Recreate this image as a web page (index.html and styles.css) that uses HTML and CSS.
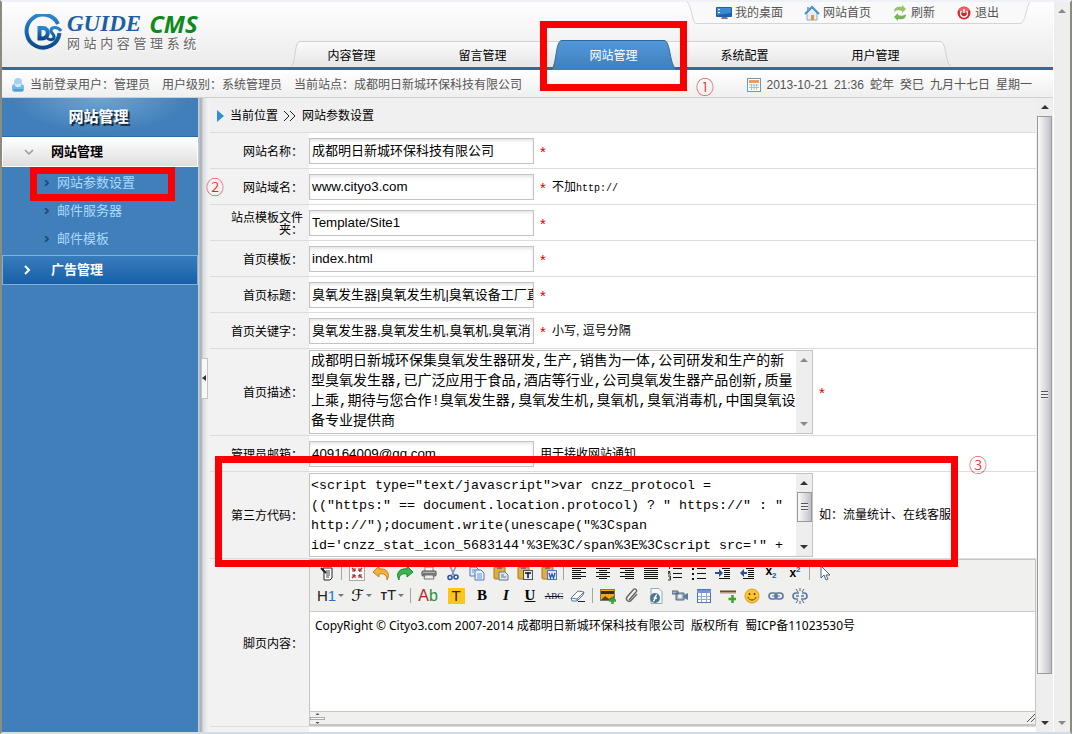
FILE: index.html
```html
<!DOCTYPE html>
<html lang="zh-CN">
<head>
<meta charset="utf-8">
<title>网站内容管理系统</title>
<link rel="stylesheet" href="styles.css">
</head>
<body>
<div class="window">
<div class="app">
  <header class="header">
    <div class="brand">
      <svg class="brand-mark" viewBox="0 0 38 38" width="38" height="38" aria-hidden="true">
        <defs><linearGradient id="gm" x1="0" y1="0" x2="0" y2="1"><stop offset="0" stop-color="#2b86d0"/><stop offset="1" stop-color="#0b4a8c"/></linearGradient></defs>
        <path d="M34 10 A16.500 16.500 0 1 0 35.500 19" fill="none" stroke="url(#gm)" stroke-width="4"/>
        <path d="M15.500 14 H19 C26 14 25 24.500 18 24.500 H15.500 Z" fill="none" stroke="url(#gm)" stroke-width="4"/>
        <path d="M37 17 C34 12 27 12.500 27 16.500 C27 20 31 20 30 23.500 C29 26.500 25 26 23 24" fill="none" stroke="url(#gm)" stroke-width="3"/>
      </svg>
      <div class="brand-text">
        <div class="brand-name"><span class="guide">GUIDE</span><span class="cms">CMS</span></div>
        <div class="tagline">网 站 内 容 管 理 系 统</div>
      </div>
    </div>
    <div class="header-main">
      <div class="utility">
        <svg class="utility-shape" viewBox="0 0 344 22" preserveAspectRatio="none" aria-hidden="true"><path d="M0 0 C5 3 5 21.500 9 21.500 H333 C339 21.500 339 3 343 0" fill="#f9f9f9" stroke="#d5d5d5"/></svg>
        <a href="#"><svg width="16" height="14" viewBox="0 0 16 14"><rect x="0" y="1" width="16" height="10" rx="1" fill="#1d5fa8"/><path d="M1 2h14v5L1 9z" fill="#3b8bd2"/><path d="M2 3h2v1H2zM2 6h2v1H2z" fill="#fff"/><path d="M5 13h7l-1-2H6z" fill="#777"/></svg>我的桌面</a>
        <a href="#"><svg width="16" height="16" viewBox="0 0 16 16"><path d="M3 8l5-5 5 5v7H3z" fill="#e8eef4" stroke="#8fa8bd"/><path d="M1 9l7-7 7 7" fill="none" stroke="#4b93c6" stroke-width="2"/><rect x="7" y="10" width="3" height="5" fill="#d99547"/><rect x="3" y="2" width="2" height="3" fill="#7ba7c7"/></svg>网站首页</a>
        <a href="#"><svg width="16" height="16" viewBox="0 0 16 16"><path d="M2 7c0-5 4-6 8-5V0l4 4-4 4V6C7 5 4 5 2 7z" fill="#97c468"/><path d="M14 9c0 5-4 6-8 5v2l-4-4 4-4v2c3 1 6 1 8-1z" fill="#79b257"/></svg>刷新</a>
        <a href="#"><svg width="16" height="16" viewBox="0 0 16 16"><circle cx="8" cy="8" r="6.500" fill="#d7262b"/><ellipse cx="8" cy="5" rx="5" ry="3" fill="#e8666a"/><path d="M5.500 6a3.500 3.500 0 1 0 5 0M8 4v4" fill="none" stroke="#fff" stroke-width="1.500"/></svg>退出</a>
      </div>
      <nav class="tabs">
        <svg class="tabs-shape" viewBox="0 0 662 26" preserveAspectRatio="none" aria-hidden="true"><defs><linearGradient id="gt" x1="0" y1="0" x2="0" y2="1"><stop offset="0" stop-color="#fbfbfb"/><stop offset="1" stop-color="#e6e6e6"/></linearGradient></defs><path d="M1 25 C6 23 4 .5 10 .5 H650 C657 .5 655 23 661 25" fill="url(#gt)" stroke="#cfcfcf"/></svg>
        <a href="#">内容管理</a>
        <a href="#">留言管理</a>
        <a href="#" class="active"><svg class="active-shape" viewBox="0 0 126 30" preserveAspectRatio="none" aria-hidden="true"><defs><linearGradient id="ga" x1="0" y1="0" x2="0" y2="1"><stop offset="0" stop-color="#5398dc"/><stop offset="1" stop-color="#3f7fba"/></linearGradient></defs><path d="M0 30 C6 26 4 .5 11 .5 H113 C120 .5 118 26 126 30" fill="url(#ga)" stroke="#2f689c"/></svg><span>网站管理</span><i class="mark mark-tab"></i></a>
        <a href="#">系统配置</a>
        <a href="#">用户管理</a>
      </nav>
    </div>
  </header>

  <div class="status">
    <svg width="14" height="16" viewBox="0 0 14 16" aria-hidden="true"><rect x="1" y="7" width="12" height="8" rx="3" fill="#79b8e2"/><circle cx="7" cy="5" r="4" fill="#a5d3ee"/><path d="M3 7h8l-2 3H5z" fill="#cfe8f6"/><path d="M2 12h10v2H3z" fill="#529ed2"/></svg>
    <span>当前登录用户：管理员</span><span>用户级别：系统管理员</span><span>当前站点：成都明日新城环保科技有限公司</span>
    <b class="step step-one">①</b>
    <time class="date">
      <svg width="14" height="14" viewBox="0 0 14 14" aria-hidden="true"><rect x=".5" y=".5" width="13" height="13" fill="#fff" stroke="#6c98c8"/><rect x="2" y="2" width="10" height="3" fill="#ee9c56"/><path d="M2 7h10M2 9.500h10M4.500 6v6M7 6v6M9.500 6v6" stroke="#a9bfd8"/></svg>
      <span>2013-10-21</span><span>21:36</span><span>蛇年</span><span>癸巳</span><span>九月十七日</span><span>星期一</span>
    </time>
  </div>

  <div class="body">
    <aside class="sidebar">
      <h1>网站管理</h1>
      <button type="button" class="group open"><svg width="10" height="7" viewBox="0 0 10 7"><path d="M1 1l4 4 4-4" fill="none" stroke="#999" stroke-width="1.500"/></svg>网站管理</button>
      <ul class="submenu">
        <li><svg width="5" height="6" viewBox="0 0 5 6"><path d="M1 0l3 3-3 3" fill="none" stroke="#1e4f80" stroke-width="2"/></svg><a href="#">网站参数设置</a><i class="mark mark-menu"></i><b class="step step-two">②</b></li>
        <li><svg width="5" height="6" viewBox="0 0 5 6"><path d="M1 0l3 3-3 3" fill="none" stroke="#1e4f80" stroke-width="2"/></svg><a href="#">邮件服务器</a></li>
        <li><svg width="5" height="6" viewBox="0 0 5 6"><path d="M1 0l3 3-3 3" fill="none" stroke="#1e4f80" stroke-width="2"/></svg><a href="#">邮件模板</a></li>
      </ul>
      <button type="button" class="group"><svg width="10" height="10" viewBox="0 0 10 10"><path d="M1 1l4 4-4 4" fill="none" stroke="#fff" stroke-width="2"/></svg>广告管理</button>
    </aside>
    <div class="divider"><button type="button" aria-label="收起"><svg width="4" height="6" viewBox="0 0 4 6"><path d="M4 0v6L0 3z" fill="#333"/></svg></button></div>

    <main class="content">
      <div class="crumb"><svg width="7" height="12" viewBox="0 0 7 12" aria-hidden="true"><path d="M0 0l7 6-7 6z" fill="#2c8fd0"/></svg>当前位置<svg width="12" height="10" viewBox="0 0 12 10" aria-hidden="true"><path d="M0 0l5 5-5 5M6 0l5 5-5 5" fill="none" stroke="#222"/></svg>网站参数设置</div>
      <form class="form">
        <div class="row"><label for="f1">网站名称：</label><div class="value"><input id="f1" class="cjk" value="成都明日新城环保科技有限公司"><em>*</em></div></div>
        <div class="row"><label for="f2">网站域名：</label><div class="value"><input id="f2" value="www.cityo3.com"><em>*</em><span>不加<code>http://</code></span></div></div>
        <div class="row"><label for="f3">站点模板文件夹：</label><div class="value"><input id="f3" value="Template/Site1"><em>*</em></div></div>
        <div class="row"><label for="f4">首页模板：</label><div class="value"><input id="f4" value="index.html"><em>*</em></div></div>
        <div class="row"><label for="f5">首页标题：</label><div class="value"><input id="f5" class="cjk" value="臭氧发生器|臭氧发生机|臭氧设备工厂直销"><em>*</em></div></div>
        <div class="row"><label for="f6">首页关键字：</label><div class="value"><input id="f6" class="cjk" value="臭氧发生器,臭氧发生机,臭氧机,臭氧消"><em>*</em><span>小写, 逗号分隔</span></div></div>
        <div class="row"><label for="f7">首页描述：</label><div class="value"><div class="area"><textarea id="f7" class="prose" rows="4">成都明日新城环保集臭氧发生器研发,生产,销售为一体,公司研发和生产的新
型臭氧发生器,已广泛应用于食品,酒店等行业,公司臭氧发生器产品创新,质量
上乘,期待与您合作!臭氧发生器,臭氧发生机,臭氧机,臭氧消毒机,中国臭氧设
备专业提供商</textarea><div class="bar dim"><i class="up"></i><i class="down"></i></div></div><em>*</em></div></div>
        <div class="row"><label for="f8">管理员邮箱：</label><div class="value"><input id="f8" value="409164009@qq.com"><span>用于接收网站通知</span></div></div>
        <div class="row code-row"><label for="f9">第三方代码：</label><div class="value"><div class="area"><textarea id="f9" rows="4">&lt;script type="text/javascript"&gt;var cnzz_protocol =
(("https:" == document.location.protocol) ? " https://" : "
http://");document.write(unescape("%3Cspan
id='cnzz_stat_icon_5683144'%3E%3C/span%3E%3Cscript src='" +</textarea><div class="bar"><i class="up"></i><i class="thumb short"></i><i class="down"></i></div></div><span>如：流量统计、在线客服</span></div><i class="mark mark-code"></i><b class="step step-three">③</b></div>
        <div class="row"><span class="label">脚页内容：</span><div class="value">
          <div class="editor">
            <div class="toolbar">
              <div class="tools">
                <button type="button" aria-label="源代码"><svg viewBox="0 0 16 16"><path d="M4 3h9v10l-2 2H5V6z" fill="#fff" stroke="#222"/><path d="M7 6h4M7 8h4M7 10h4M7 12h3" stroke="#444"/><path d="M2 3l5 5" stroke="#222" stroke-width="2"/></svg></button><i class="sep"></i>
                <button type="button" aria-label="全屏"><svg viewBox="0 0 16 16"><rect x=".5" y=".5" width="15" height="15" fill="#fff" stroke="#aaa"/><path d="M3 3l3 3M13 3l-3 3M3 13l3-3M13 13l-3-3" stroke="#c22" stroke-width="1.500"/><path d="M3 6h3V3M10 3v3h3M3 10h3v3M10 13v-3h3" fill="none" stroke="#822"/></svg></button>
                <button type="button" aria-label="撤销"><svg viewBox="0 0 16 16"><path d="M0 7l6-6v3c7-1 12 4 8 11 0-5-3-7-8-6v3z" fill="#f0b23c" stroke="#c4811d"/></svg></button>
                <button type="button" aria-label="重做"><svg viewBox="0 0 16 16"><path d="M16 7l-6-6v3C3 3-2 8 2 15c0-5 3-7 8-6v3z" fill="#3db54a" stroke="#1b8530"/></svg></button>
                <button type="button" aria-label="打印"><svg viewBox="0 0 16 16"><path d="M4 2h8v5H4z" fill="#fff" stroke="#888"/><rect x="1" y="6" width="14" height="5" rx="1" fill="#b5b5b5" stroke="#444"/><path d="M2 9h12" stroke="#333"/><path d="M4 10h8l1 4H3z" fill="#eee" stroke="#777"/></svg></button>
                <button type="button" aria-label="剪切"><svg viewBox="0 0 16 16"><path d="M5 1l4 9M11 1L7 10" stroke="#7d93b5" stroke-width="1.500"/><circle cx="5" cy="12.500" r="2" fill="none" stroke="#2553a5" stroke-width="1.600"/><circle cx="11" cy="12" r="2" fill="none" stroke="#2553a5" stroke-width="1.600"/></svg></button>
                <button type="button" aria-label="复制"><svg viewBox="0 0 16 16"><path d="M1 2h6l3 3v6H1z" fill="#dfe9fb" stroke="#4f78c4"/><path d="M6 5h6l3 3v7H6z" fill="#eaf1ff" stroke="#4f78c4"/><path d="M8 9h5M8 11h5M8 13h5M3 5h3M3 7h2" stroke="#6b90d5"/></svg></button>
                <button type="button" aria-label="粘贴"><svg viewBox="0 0 16 16"><rect x="1" y="2" width="11" height="12" rx="1" fill="#e2ad3d" stroke="#a87b22"/><rect x="4" y="1" width="5" height="3" fill="#777"/><path d="M6 7h6l3 3v5H6z" fill="#dfe8f0" stroke="#678"/><path d="M8 10h3M8 12h5" stroke="#678"/></svg></button>
                <button type="button" aria-label="粘贴为文本"><svg viewBox="0 0 16 16"><rect x="1" y="2" width="11" height="12" rx="1" fill="#e2ad3d" stroke="#a87b22"/><rect x="4" y="1" width="5" height="3" fill="#777"/><rect x="6.500" y="5.500" width="9" height="9" fill="#e8edf5" stroke="#456"/><path d="M8 8h6M11 8v5" stroke="#111" stroke-width="1.500"/></svg></button>
                <button type="button" aria-label="从 Word 粘贴"><svg viewBox="0 0 16 16"><rect x="1" y="2" width="11" height="12" rx="1" fill="#e2ad3d" stroke="#a87b22"/><rect x="4" y="1" width="5" height="3" fill="#777"/><rect x="6.500" y="5.500" width="9" height="9" fill="#dde9fb" stroke="#4f78c4"/><path d="M8 8l1.500 5L11 9l1.500 4L14 8" fill="none" stroke="#2457b0" stroke-width="1.300"/></svg></button><i class="sep"></i>
                <button type="button" aria-label="左对齐"><svg viewBox="0 0 16 16"><path d="M1 3.500h14M1 5.500h9M1 7.500h14M1 9.500h9M1 11.500h14M1 13.500h9" stroke="#111"/></svg></button>
                <button type="button" aria-label="居中"><svg viewBox="0 0 16 16"><path d="M1 3.500h14M4 5.500h8M1 7.500h14M4 9.500h8M1 11.500h14M4 13.500h8" stroke="#111"/></svg></button>
                <button type="button" aria-label="右对齐"><svg viewBox="0 0 16 16"><path d="M1 3.500h14M6 5.500h9M1 7.500h14M6 9.500h9M1 11.500h14M6 13.500h9" stroke="#111"/></svg></button>
                <button type="button" aria-label="两端对齐"><svg viewBox="0 0 16 16"><path d="M1 3.500h14M1 5.500h14M1 7.500h14M1 9.500h14M1 11.500h14M1 13.500h14" stroke="#111"/></svg></button>
                <button type="button" aria-label="编号"><svg viewBox="0 0 16 16"><path d="M6 3.500h9M6 8.500h9M6 12.500h9" stroke="#111"/><path d="M2.500 1v3M1 6.500h2v1H1.500v1.500H4M1 11h2.500v4H1M2 13h1.500" fill="none" stroke="#333"/></svg></button>
                <button type="button" aria-label="项目符号"><svg viewBox="0 0 16 16"><path d="M6 3.500h9M6 8.500h9M6 13.500h9" stroke="#111"/><path d="M1 3h2v2H1zM1 8h2v2H1zM1 13h2v2H1z" fill="#111"/></svg></button>
                <button type="button" aria-label="增加缩进"><svg viewBox="0 0 16 16"><path d="M7 3.500h8M9 5.500h6M9 7.500h6M9 9.500h6M9 11.500h6M4 13.500h11" stroke="#111"/><path d="M0 7h4V4l4 4-4 4V9H0z" fill="#2d4f8a"/></svg></button>
                <button type="button" aria-label="减少缩进"><svg viewBox="0 0 16 16"><path d="M7 3.500h8M9 5.500h6M9 7.500h6M9 9.500h6M9 11.500h6M4 13.500h11" stroke="#111"/><path d="M8 7H5V4L1 8l4 4V9h3z" fill="#2d4f8a"/></svg></button>
                <button type="button" aria-label="下标"><span class="script">x<sub>2</sub></span></button>
                <button type="button" aria-label="上标"><span class="script">x<sup>2</sup></span></button><i class="sep"></i>
                <button type="button" aria-label="全选"><svg viewBox="0 0 16 16"><path d="M4 1v12l3-3 2 5 2-1-2-4h4z" fill="#fff" stroke="#4e6282"/></svg></button>
              </div>
              <div class="tools">
                <button type="button" class="drop"><span class="heading">H<b>1</b></span><i class="caret"></i></button>
                <button type="button" class="drop"><span class="face">ℱ</span><i class="caret"></i></button>
                <button type="button" class="drop"><span class="size"><small>T</small>T</span><i class="caret"></i></button><i class="sep"></i>
                <button type="button" class="wide"><span class="ab">A<b>b</b></span></button>
                <button type="button" class="wide"><span class="hilite">T</span></button>
                <button type="button"><span class="serif">B</span></button>
                <button type="button"><span class="serif italic">I</span></button>
                <button type="button"><span class="serif under">U</span></button>
                <button type="button"><span class="strike">ABC</span></button>
                <button type="button" aria-label="清除格式"><svg viewBox="0 0 16 16"><path d="M1 10l7-7 6 1-1 3-6 6H2z" fill="#fff" stroke="#5a74a6"/><path d="M1 10l6 1 7-7M7 11v2" fill="none" stroke="#5a74a6"/><path d="M8 13.500h7" stroke="#223"/></svg></button><i class="sep"></i>
                <button type="button" aria-label="图片"><svg viewBox="0 0 16 16"><rect x=".5" y="1.500" width="14" height="11" fill="#f2a71c" stroke="#777"/><path d="M1 6h13V3H1z" fill="#3b2b12"/><path d="M1 12l4-4 4 3 5-3v4z" fill="#6b3a08"/><path d="M12.500 9v7M9 12.500h7" stroke="#3ba233" stroke-width="2.500"/></svg></button>
                <button type="button" aria-label="附件"><svg viewBox="0 0 16 16"><path d="M5 12l7-8c2-2-1-4-2.500-2.500L3 9c-2 3 2 6 4 3.500L13 6" fill="none" stroke="#666" stroke-width="1.400"/></svg></button>
                <button type="button" aria-label="Flash"><svg viewBox="0 0 16 16"><path d="M3 .5h8l3 3v12H3z" fill="#f5f7fa" stroke="#9aa7b5"/><circle cx="7" cy="10" r="5" fill="#4a7696"/><path d="M9 7c-3 0-1 6-4 6M5.500 10H9" fill="none" stroke="#fff" stroke-width="1.400"/></svg></button>
                <button type="button" aria-label="视频"><svg viewBox="0 0 16 16"><path d="M0 3h6v3H0zM4 5h8v7H4z" fill="#9fb4c8" stroke="#51677c"/><path d="M12 7l4-2v7l-4-2z" fill="#5f7b95"/><circle cx="8" cy="8.500" r="2" fill="#e8f0f7"/></svg></button>
                <button type="button" aria-label="表格"><svg viewBox="0 0 16 16"><rect x="1.500" y="1.500" width="13" height="13" fill="#fff" stroke="#4a74bb"/><path d="M1 2h14v3H1z" fill="#6f96d8"/><path d="M2 8.500h12M2 11.500h12M5.500 5v9M10.500 5v9" stroke="#8fabdc"/></svg></button>
                <button type="button" aria-label="水平线"><svg viewBox="0 0 16 16"><path d="M0 3.500h16" stroke="#6d4a20" stroke-width="2"/><path d="M0 5.500h16" stroke="#d8c59b"/><path d="M12.500 7v8M8.500 11h8" stroke="#3ba233" stroke-width="2.500"/></svg></button>
                <button type="button" aria-label="表情"><svg viewBox="0 0 16 16"><circle cx="8" cy="8" r="7" fill="#fbc530" stroke="#d99a24"/><path d="M5.500 5v2M10.500 5v2" stroke="#5a3300" stroke-width="1.500"/><path d="M4 9c1 4 7 4 8 0" fill="none" stroke="#5a3300"/></svg></button>
                <button type="button" aria-label="链接"><svg viewBox="0 0 16 16"><rect x="1" y="5" width="8" height="6" rx="3" fill="none" stroke="#5b779d" stroke-width="1.600"/><rect x="7" y="5" width="8" height="6" rx="3" fill="none" stroke="#5b779d" stroke-width="1.600"/><path d="M4 8h8" stroke="#5b779d"/></svg></button>
                <button type="button" aria-label="取消链接"><svg viewBox="0 0 16 16"><path d="M7 5H4c-4 0-4 6 0 6h2M10 5h2c4 0 4 6 0 6H9M4 8h3M9 8h3" fill="none" stroke="#5b779d" stroke-width="1.600"/><path d="M4 1l2 3M8 0v3M12 1l-2 3M4 15l2-3M8 16v-3M12 15l-2-3" stroke="#4e617c"/></svg></button>
              </div>
            </div>
            <div class="page" contenteditable="true" role="textbox" aria-label="脚页内容">CopyRight © Cityo3.com 2007-2014 成都明日新城环保科技有限公司&nbsp; 版权所有&nbsp; 蜀ICP备11023530号</div>
            <div class="editor-foot">
              <svg width="15" height="11" viewBox="0 0 15 11"><rect x=".5" y="4.500" width="14" height="2" fill="#fff" stroke="#aaa"/><path d="M7.500 0l2 2h-4zM7.500 11l2-2h-4z" fill="#555"/></svg>
              <svg width="8" height="8" viewBox="0 0 8 8"><path d="M0 8l8-8M4 8l4-4" stroke="#555"/></svg>
            </div>
          </div>
        </div></div>
        <div class="row last"><span class="label"></span><div class="value"></div></div>
      </form>
    </main>
    <div class="bar inner"><i class="up"></i><i class="thumb"></i><i class="down"></i></div>
  </div>
</div>
<div class="bar outer dim"><i class="up"></i><i class="down"></i></div>
</div>
</body>
</html>
```
FILE: styles.css
```css
* { box-sizing: border-box; }
body {
  margin: 0;
  font: 12px/16px "Liberation Sans", "Noto Sans CJK SC", sans-serif;
  color: #000;
  background: #fff;
}
a { text-decoration: none; color: inherit; }
button { font: inherit; border: 0; padding: 0; background: none; color: inherit; }

.window {
  display: flex;
  min-height: 100vh;
  border: 2px solid #8b8b80;
  border-top-color: #eef2f6;
  border-bottom-color: #d3dce5;
  overflow: hidden;
}
.app { flex: 1; min-width: 0; display: flex; flex-direction: column; }

/* header */
.header {
  display: flex;
  height: 68px;
  border-bottom: 3px solid #2e6c9f;
  background: linear-gradient(#fefefe, #ebebeb);
}
.brand { width: 284px; padding: 12px 0 0 22px; display: flex; gap: 5px; flex-shrink: 0; }
.brand-name { display: flex; gap: 8px; height: 20px; line-height: 20px; }
.guide { font-family: "Liberation Serif", serif; font-style: italic; font-weight: bold; font-size: 23px; color: #1a5fa6; }
.cms { font-family: "Open Sans", sans-serif; font-style: italic; font-weight: bold; font-size: 24px; color: #0c8a1c; }
.tagline { font-size: 13px; line-height: 20px; color: #666; text-shadow: 1px 1px 0 #fff; white-space: nowrap; }
.header-main { flex: 1; display: flex; flex-direction: column; justify-content: space-between; }
.utility {
  position: relative;
  align-self: flex-end;
  width: 344px;
  height: 22px;
  margin-right: 22px;
  padding-left: 29px;
  display: flex;
  gap: 21px;
  align-items: center;
  color: #555;
}
.utility-shape { position: absolute; inset: 0; width: 100%; height: 100%; }
.utility a { position: relative; display: flex; align-items: center; gap: 3px; }
.tabs { position: relative; display: flex; width: 655px; height: 26px; }
.tabs-shape { position: absolute; left: 4px; top: 0; width: 662px; height: 26px; }
.tabs a { position: relative; flex: 1; display: flex; align-items: center; justify-content: center; height: 29px; }
.tabs .active { color: #fff; }
.active-shape { position: absolute; left: 3px; top: -1px; width: 126px; height: 30px; }
.active span { position: relative; }

/* red annotation frames and step numbers */
.mark { position: absolute; border: 7px solid #fb0000; pointer-events: none; z-index: 3; }
.mark-tab { left: -8px; top: -20px; width: 147px; height: 70px; }
.mark-menu { left: 28px; top: -2px; width: 145px; height: 34px; }
.mark-code { left: 5px; top: -16px; width: 743px; height: 111px; }
.step { position: absolute; z-index: 3; font: 18px/18px "Noto Sans CJK SC", sans-serif; font-weight: 300; color: #e02020; }
.step-one { left: 694px; top: 7px; }
.step-two { left: 204px; top: 8px; }
.step-three { left: 759px; top: -17px; }

/* status bar */
.status {
  position: relative;
  display: flex;
  align-items: center;
  gap: 12px;
  height: 28px;
  padding: 2px 21px 0 9px;
  color: #555;
  border-bottom: 1px solid #d0d0d0;
  background: linear-gradient(#fff, #efefef);
}
.status > svg { margin-right: -7px; }
.date { margin-left: auto; display: flex; align-items: center; gap: 6px; }

/* sidebar */
.body { flex: 1; display: flex; }
.sidebar { width: 196px; flex-shrink: 0; background: #417fba; }
.sidebar h1 {
  margin: 0;
  height: 39px;
  padding-right: 3px;
  font-size: 15px;
  line-height: 38px;
  text-align: center;
  color: #fff;
  text-shadow: 2px 2px 1px #123;
  background: radial-gradient(ellipse 45% 90% at 50% 0, #6fa4d3, #417fba);
  border-bottom: 1px solid #2f6ba5;
}
.group {
  display: flex;
  align-items: center;
  gap: 17px;
  width: 100%;
  height: 30px;
  padding-left: 21px;
  font-size: 13px;
  font-weight: bold;
  color: #fff;
  background: linear-gradient(#397cbb, #1660a8);
  border: 1px solid #82b1dc;
}
.group.open { color: #000; background: linear-gradient(#fff, #dedede); border-color: #fff; }
.submenu { list-style: none; margin: 0; padding: 2px 0; }
.submenu li { position: relative; height: 28px; padding-left: 42px; display: flex; align-items: center; gap: 8px; }
.submenu a { font-size: 13px; color: #a9daff; }

.divider {
  width: 12px;
  flex-shrink: 0;
  display: flex;
  align-items: center;
  background: linear-gradient(90deg, #c9d2db 0, #a6acb2 3px, #d9dcdf 5px, #f2f2f2 10px);
}
.divider button {
  width: 7px;
  height: 41px;
  margin: 0 0 74px 3px;
  display: flex;
  align-items: center;
  background: #f8f8f8;
  border: 1px solid #c4c4c4;
}

/* settings form */
.content { flex: 1; min-width: 0; background: #f2f2f2; }
.crumb { display: flex; align-items: center; gap: 6px; height: 35px; padding: 1px 0 0 7px; border-bottom: 1px solid #dcdcdc; background: #f0f0f0; }
.row { position: relative; display: flex; border-bottom: 1px solid #dcdcdc; }
.row label, .row .label {
  width: 99px;
  flex-shrink: 0;
  display: flex;
  align-items: center;
  justify-content: flex-end;
  padding: 2px 6px 0 18px;
  line-height: 12px;
  text-align: right;
}
.value { flex: 1; min-width: 0; min-height: 35px; display: flex; align-items: center; gap: 6px; background: #fff; }
.value em { font-style: normal; font-size: 15px; line-height: 12px; height: 10px; width: 6px; color: #d00; }
.value code { font: 10px "Liberation Mono", monospace; }
.value input {
  width: 225px;
  height: 26px;
  padding: 0 0 0 2px;
  font-family: "Liberation Sans", "Noto Sans CJK SC", sans-serif;
  border: 1px solid #c3c3c3;
  box-shadow: inset 0 2px 3px #e6e6e6;
}
.value .cjk { font-size: 13px; padding-bottom: 2px; }
.area { display: flex; width: 504px; height: 84px; margin: 1px 0; border: 1px solid #c3c3c3; }
.area textarea {
  flex: 1;
  min-width: 0;
  padding: 2px 0 0 1px;
  border: 0;
  resize: none;
  overflow: hidden;
  white-space: pre;
  font-family: "Liberation Mono", "Noto Sans CJK SC", monospace;
  line-height: 20px;
}
.area .prose { font-size: 14px; padding-top: 0; }

/* scroll bars */
.bar { width: 16px; flex-shrink: 0; display: flex; flex-direction: column; align-items: center; background: #eee; }
.up, .down { width: 8px; height: 18px; display: flex; align-items: center; }
.up::before, .down::before { content: ""; border: 4px solid transparent; }
.up::before { border-top: 0; border-bottom-color: #333; }
.down::before { border-bottom: 0; border-top-color: #333; }
.dim .up::before { border-bottom-color: #888; }
.dim .down::before { border-top-color: #888; }
.down { margin-top: auto; }
.thumb {
  flex: 1;
  width: 15px;
  margin-bottom: 40px;
  display: flex;
  align-items: center;
  justify-content: center;
  border: 1px solid #999;
  background: linear-gradient(90deg, #fafafa, #d8d8dc 60%, #bfbfc6);
}
.thumb::before { content: ""; width: 7px; height: 8px; background: repeating-linear-gradient(#555 0 1px, #eee 1px 3px); }
.thumb.short { flex: none; height: 30px; margin: 0; }
.inner { width: 17px; }
.outer { width: 17px; border-left: 1px solid #fff; }

/* rich text editor */
.editor { flex: 1; min-width: 0; border: 1px solid #c5c5c5; border-bottom-width: 2px; }
.toolbar { padding: 1px 5px 4px; background: #f0f0ee; border-bottom: 1px solid #ccc; }
.tools { display: flex; height: 23px; }
.tools button { width: 24px; display: flex; align-items: center; justify-content: center; }
.tools svg { width: 16px; height: 16px; }
.tools .drop { width: 31px; gap: 2px; }
.tools .wide { width: 28px; }
.sep { width: 6px; flex-shrink: 0; padding: 4px 2px; }
.sep::before { content: ""; display: block; height: 100%; border-left: 1px solid #a5a5a5; }
.caret { border: 3px solid transparent; border-top-color: #777; border-bottom: 0; }
.heading, .size, .ab { font-size: 15px; color: #222; }
.ab { font-size: 16px; color: #b91f2b; }
.heading b { font-weight: normal; color: #2a6fd0; }
.ab b { font-weight: normal; color: #2f8f3a; }
.size small { font-size: 10px; font-weight: bold; }
.face { font: italic 16px "DejaVu Serif", "DejaVu Sans", serif; }
.hilite { width: 17px; font-size: 15px; text-align: center; background: #fdc51a; color: #322; }
.serif { font: bold 15px "Liberation Serif", serif; }
.italic { font-style: italic; }
.under { text-decoration: underline; }
.strike { font: 9px "Liberation Serif", serif; text-decoration: line-through; color: #113; }
.script { font: bold 12px/14px "Liberation Sans", sans-serif; }
.script sub, .script sup { font-size: 8px; line-height: 8px; color: #2d4f8a; }
.page { height: 99px; padding: 6px 5px; font-family: "Noto Sans", "Noto Sans CJK SC", sans-serif; outline: 0; }
.editor-foot { display: flex; align-items: center; justify-content: space-between; height: 13px; background: #f0f0ee; border-top: 1px solid #c5c5c5; }
.last { border: 0; height: 5px; }
.last .value { min-height: 0; }
```
